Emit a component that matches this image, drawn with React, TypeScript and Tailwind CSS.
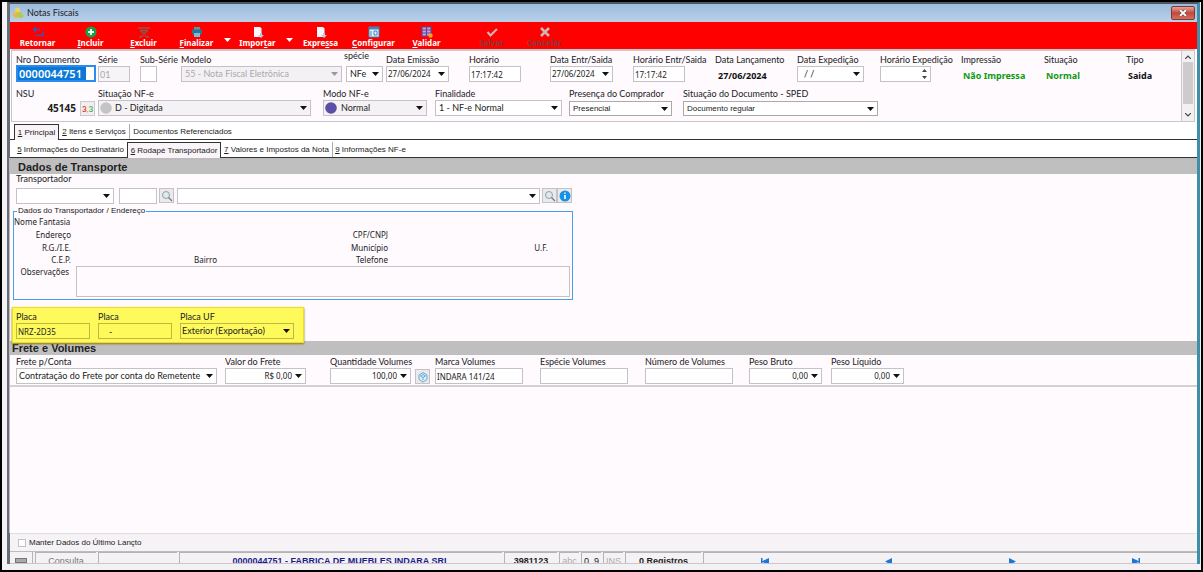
import React, { useId } from "react";

const label = "block h-[10px] whitespace-nowrap text-[9px] leading-[10px] text-[#222]";
const box = "block w-full rounded-none border border-[#c4c2c6] bg-white px-[3px] text-[9px] leading-[12px] text-[#222] outline-none";
const digits = "h-[16px] font-['Noto_Sans',sans-serif] !text-[8px]";
const date = "h-[16px] font-['Noto_Sans',sans-serif] !text-[8px] !px-px";

function Key({ text, at }: { text: string; at: number }) {
  return (
    <span>
      {text.slice(0, at)}
      <u className="underline">{text[at]}</u>
      {text.slice(at + 1)}
    </span>
  );
}

function Caret({ className = "" }: { className?: string }) {
  return (
    <svg viewBox="0 0 7 4" className={`h-[4px] w-[7px] ${className}`} fill="currentColor" aria-hidden="true">
      <path d="M0 0h7L3.500 4z" />
    </svg>
  );
}

type FieldProps = {
  name: string;
  value?: string;
  className?: string;
  inputClass?: string;
  labelClass?: string;
  disabled?: boolean;
};

function TextField({ name, value = "", className = "", inputClass = "h-[16px]", labelClass = "", disabled }: FieldProps) {
  const id = useId();
  return (
    <div className={`flex shrink-0 flex-col gap-px ${className}`}>
      <label htmlFor={id} className={`${label} ${labelClass}`}>{name}</label>
      <input id={id} defaultValue={value} disabled={disabled} className={`${box} ${inputClass}`} />
    </div>
  );
}

function SelectBox({ id, value, aria, disabled, selectClass = "h-[16px]", right }: { id?: string; value: string; aria?: string; disabled?: boolean; selectClass?: string; right?: boolean }) {
  return (
    <div className="relative w-full">
      <select
        id={id}
        aria-label={aria}
        disabled={disabled}
        defaultValue={value}
        className={`${box} ${selectClass} appearance-none py-0 ${right ? "pr-[13px] text-right" : ""}`}
      >
        <option>{value}</option>
      </select>
      <Caret className={`pointer-events-none absolute right-[4px] top-[6px] ${disabled ? "text-[#999]" : "text-[#111]"}`} />
    </div>
  );
}

function SelectField({ name, value = "", className = "", inputClass, labelClass = "", disabled, icon, right }: FieldProps & { icon?: React.ReactNode; right?: boolean }) {
  const id = useId();
  return (
    <div className={`flex shrink-0 flex-col gap-px ${className}`}>
      <label htmlFor={id} className={`${label} ${labelClass}`}>{name}</label>
      <div className="relative">
        <SelectBox id={id} value={value} disabled={disabled} selectClass={inputClass} right={right} />
        {icon && <span className="pointer-events-none absolute left-[2px] top-[2px]">{icon}</span>}
      </div>
    </div>
  );
}

function Info({ name, value, className = "", valueClass = "" }: { name: string; value: string; className?: string; valueClass?: string }) {
  return (
    <div className={`shrink-0 ${className}`}>
      <span className={label}>{name}</span>
      <strong className={`mt-[4px] block overflow-hidden whitespace-nowrap pl-[2px] font-['Noto_Sans',sans-serif] text-[9px] leading-[13px] ${valueClass}`}>{value}</strong>
    </div>
  );
}

function Tool({ text, at = -1, icon, off }: { text: string; at?: number; icon: React.ReactNode; off?: boolean }) {
  return (
    <button
      disabled={off}
      className={`flex w-[53px] shrink-0 flex-col items-center whitespace-nowrap pt-[4px] font-['Noto_Sans',sans-serif] text-[8px] font-bold leading-[10px] ${off ? "text-[#8a3a3a]" : "text-white"}`}
    >
      <svg viewBox="0 0 12 12" className="h-[12px] w-[12px]" aria-hidden="true">{icon}</svg>
      {at < 0 ? text : <Key text={text} at={at} />}
    </button>
  );
}

const page = (
  <g>
    <path d="M2 1h6l1.500 1.500V11H2z" fill="#f7f7fb" />
    <path d="M8 7h2v2h2l-3 3-3-3h2z" fill="#b9c9e6" />
  </g>
);

function Toolbar() {
  return (
    <div role="toolbar" aria-label="Ações" className="flex h-[27px] bg-[#ff0000] pl-px">
      <Tool text="Retornar" icon={<g fill="none" stroke="#4a4fa8" strokeWidth="1.500"><path d="M4 1 1.500 3.500 4 6M1.500 3.500H8M3 9.500h8V5" /></g>} />
      <Tool text="Incluir" at={0} icon={<g><circle cx="6" cy="6" r="5.600" fill="#12a347" /><path d="M6 3v6M3 6h6" stroke="#fff" strokeWidth="1.800" /></g>} />
      <Tool text="Excluir" at={0} icon={<g fill="none" stroke="#8a5a4c" strokeWidth="1.300"><path d="M0 2h12M2 4.500h8M3 11l6-6M9 11 3 5M1 11h3M8 11h3" /></g>} />
      <Tool text="Finalizar" at={0} icon={<g><path d="M3 1h6v3H3z" fill="#5d93ad" /><path d="M1 3.500h10v5H1z" fill="#2e7390" /><path d="M3 7h6v4H3z" fill="#7fb8cf" /></g>} />
      <button aria-label="Opções de finalizar" className="flex w-[8px] justify-center pt-[16px] text-white"><Caret className="w-[5px]" /></button>
      <Tool text="Importar" at={5} icon={page} />
      <button aria-label="Opções de importar" className="flex w-[10px] justify-center pt-[16px] text-white"><Caret className="w-[5px]" /></button>
      <Tool text="Expressa" at={5} icon={page} />
      <Tool text="Configurar" at={0} icon={<g><path d="M1 1h10v10H1z" fill="#e8f3fb" stroke="#3e86bd" /><path d="M1 1h10v2.500H1z" fill="#3e86bd" /><path d="M3 5v5M9 5H6v4h3z" stroke="#3e86bd" fill="none" /></g>} />
      <Tool text="Validar" at={0} icon={<g><path d="M1 1h9v9H1z" fill="#d9a0c0" /><path d="M1 1h9v9H1zM1 4h9M1 7h9M5.500 1v9" fill="none" stroke="#5547a5" strokeWidth="1.200" /><circle cx="9.500" cy="9.500" r="2.200" fill="#f4a024" /></g>} />
      <div className="w-[12px]" />
      <Tool off text="Salvar" icon={<path d="m1.500 6 3 3.500L11 3" fill="none" stroke="#d0b4b4" strokeWidth="2.200" />} />
      <Tool off text="Cancelar" icon={<path d="m2 2 8 8M10 2l-8 8" fill="none" stroke="#c9b8b8" strokeWidth="2.500" />} />
    </div>
  );
}

function Header() {
  const nro = useId();
  const nsu = useId();
  return (
    <section className="ml-px mr-[2px] flex border border-t-2 border-[#c9c7ca] bg-[#fefafe]">
      <div className="h-[70px] min-w-0 flex-1 overflow-hidden pl-[4px] pt-[4px]">
        <div className="flex">
          <div className="w-[82px] shrink-0">
            <label htmlFor={nro} className={label}>Nro Documento</label>
            <div className="flex h-[17px] w-[80px] border-2 border-[#2f8af0] bg-white">
              <input
                id={nro}
                defaultValue="0000044751"
                className="w-[68px] bg-[#0a78d7] pl-px font-['Noto_Sans',sans-serif] text-[11px] font-semibold leading-[13px] text-white outline-none"
              />
            </div>
          </div>
          <TextField name="Série" value="01" disabled className="mr-[10px] w-[32px]" inputClass="h-[16px] !bg-[#f6f4f7] !text-[#aaa] !px-px" />
          <TextField name="Sub-Série" className="mr-[24px] w-[17px]" />
          <SelectField name="Modelo" value="55 - Nota Fiscal Eletrônica" disabled className="mr-[4px] w-[161px]" inputClass="h-[16px] !bg-[#f3f1f4] !text-[#aaa]" />
          <div className="mr-[3px] w-[37px] shrink-0">
            <SelectField name="spécie" value="NFe" labelClass="-mt-[4px] mb-[4px] -ml-[2px]" />
          </div>
          <SelectField name="Data Emissão" value="27/06/2024" className="mr-[20px] w-[63px]" inputClass={date} />
          <TextField name="Horário" value="17:17:42" className="mr-[29px] w-[52px]" inputClass={date} />
          <SelectField name="Data Entr/Saida" value="27/06/2024" className="mr-[20px] w-[63px]" inputClass={date} />
          <TextField name="Horário Entr/Saida" value="17:17:42" className="mr-[30px] w-[52px]" inputClass={date} />
          <Info name="Data Lançamento" value="27/06/2024" className="w-[82px]" valueClass="pl-[3px] text-[#111]" />
          <SelectField name="Data Expedição" value="/  /" className="mr-[16px] w-[67px]" inputClass="h-[16px] !pl-[6px]" />
          <div className="relative mr-[30px] w-[51px] shrink-0">
            <TextField name="Horário Expedição" />
            <svg viewBox="0 0 5 10" className="pointer-events-none absolute bottom-[3px] right-[4px] h-[10px] w-[5px]" fill="#444" aria-hidden="true">
              <path d="M0 3h5L2.500 0zM0 7h5L2.500 10z" />
            </svg>
          </div>
          <Info name="Impressão" value="Não Impressa" className="w-[83px]" valueClass="w-[68px] text-[#0c9a12]" />
          <Info name="Situação" value="Normal" className="w-[82px]" valueClass="text-[#0c9a12]" />
          <Info name="Tipo" value="Saida" valueClass="text-[#111]" />
        </div>
        <div className="mt-[7px] flex">
          <div className="w-[82px] shrink-0">
            <label htmlFor={nsu} className={label}>NSU</label>
            <div className="flex pt-[2px]">
              <input id={nsu} defaultValue="45145" className="mr-[4px] w-[60px] bg-transparent text-right font-['Noto_Sans',sans-serif] text-[10px] font-bold leading-[15px] text-[#222] outline-none" />
              <button aria-label="Renumerar" className="flex h-[15px] w-[15px] items-center justify-center border border-[#cbc9cc] bg-[#f0eef0] text-[8px] font-bold">
                <span className="text-[#e8402c]">3</span>
                <span className="text-[#f0b020]">,</span>
                <span className="text-[#4caf50]">3</span>
              </button>
            </div>
          </div>
          <SelectField
            name="Situação NF-e"
            value="D - Digitada"
            className="mr-[12px] w-[213px]"
            inputClass="h-[16px] !bg-[#f4f2f5] !pl-[16px]"
            icon={<svg viewBox="0 0 12 12" className="h-[12px] w-[12px]"><circle cx="6" cy="6" r="5.800" fill="#c4c4c4" /><path d="M3 1a6 6 0 0 0 8 8A6 6 0 0 1 3 1z" fill="#8f8f8f" /></svg>}
          />
          <SelectField
            name="Modo NF-e"
            value="Normal"
            className="mr-[8px] w-[104px]"
            inputClass="h-[16px] !bg-[#f4f2f5] !pl-[17px]"
            icon={<svg viewBox="0 0 12 12" className="h-[12px] w-[12px]"><circle cx="6" cy="6" r="5.800" fill="#5a4ea6" /><path d="M3 1a6 6 0 0 0 8 8A6 6 0 0 1 3 1z" fill="#3d3190" /></svg>}
          />
          <SelectField name="Finalidade" value="1 - NF-e Normal" className="mr-[7px] w-[127px]" />
          <SelectField name="Presença do Comprador" value="Presencial" className="mr-[11px] w-[103px] pt-px" inputClass="h-[15px] font-['Liberation_Sans',sans-serif] !text-[8px] !border-[#aaa]" labelClass="-mt-px mb-px" />
          <SelectField name="Situação do Documento - SPED" value="Documento regular" className="w-[195px] pt-px" inputClass="h-[15px] font-['Liberation_Sans',sans-serif] !text-[8px] !border-[#aaa]" labelClass="-mt-px mb-px" />
        </div>
      </div>
      <div className="flex w-[13px] shrink-0 flex-col items-center justify-between border-l border-[#c9c7ca] bg-[#f2f0f2] py-[4px]" aria-hidden="true">
        <svg viewBox="0 0 6 4" className="h-[4px] w-[6px]" fill="none" stroke="#444" strokeWidth="1.200"><path d="m0 4 3-3 3 3" /></svg>
        <div className="mb-[6px] h-[42px] w-[10px] bg-[#cdcbcd]" />
        <svg viewBox="0 0 6 4" className="h-[4px] w-[6px]" fill="none" stroke="#444" strokeWidth="1.200"><path d="m0 0 3 3 3-3" /></svg>
      </div>
    </section>
  );
}

function Tab({ children, active, sep, className = "" }: { children: React.ReactNode; active?: boolean; sep?: boolean; className?: string }) {
  return (
    <button
      role="tab"
      aria-selected={!!active}
      className={`flex shrink-0 items-center justify-center whitespace-nowrap text-[8px] leading-[10px] text-[#222] ${
        active ? "-mb-px h-[16px] border border-b-0 border-[#333] bg-[#f8f4f8]" : "h-[15px]"
      } ${sep ? "border-l border-[#aaa]" : ""} ${className}`}
    >
      {children}
    </button>
  );
}

function SectionTitle({ children, className = "" }: { children: React.ReactNode; className?: string }) {
  return (
    <h2 className={`h-[14px] bg-[#bfbfbf] font-['Liberation_Sans',sans-serif] text-[11px] font-bold leading-[14px] text-[#222] ${className}`}>
      {children}
    </h2>
  );
}

function IconButton({ name, children }: { name: string; children: React.ReactNode }) {
  return (
    <button aria-label={name} className="flex h-[15px] w-[15px] shrink-0 items-center justify-center border border-[#c4c2c6] bg-[#ebe9ec]">
      <svg viewBox="0 0 12 12" className="h-[12px] w-[12px]" aria-hidden="true">{children}</svg>
    </button>
  );
}

const lens = (
  <g fill="none">
    <circle cx="5" cy="5" r="3.500" fill="#dfe9ee" stroke="#8fa0aa" />
    <path d="m7.500 7.500 3.500 3.500" stroke="#777" strokeWidth="1.300" />
  </g>
);

function Transport() {
  const obs = useId();
  const right = "text-right";
  return (
    <section>
      <SectionTitle className="pl-[8px]">Dados de Transporte</SectionTitle>
      <div className="pl-[6px]">
        <span className={label}>Transportador</span>
        <div className="mt-[4px] flex">
          <div className="mr-[5px] w-[98px] shrink-0"><SelectBox value="" aria="Tipo de transportador" /></div>
          <input aria-label="Código do transportador" className={`${box} mr-[2px] h-[16px] !w-[38px] shrink-0`} />
          <IconButton name="Pesquisar código">{lens}</IconButton>
          <div className="ml-[3px] mr-[2px] w-[363px] shrink-0"><SelectBox value="" aria="Transportador" /></div>
          <IconButton name="Pesquisar transportador">{lens}</IconButton>
          <IconButton name="Informações do transportador">
            <circle cx="6" cy="6" r="5.500" fill="#1592e6" />
            <path d="M6 5v4M6 2.500v1.200" stroke="#fff" strokeWidth="1.600" />
          </IconButton>
        </div>
      </div>
      <fieldset className="ml-[3px] mt-[2px] w-[560px] border border-[#4a9fe4] pb-[2px]">
        <legend className="ml-[3px] px-px font-['Liberation_Sans',sans-serif] text-[8px] leading-[10px] text-[#222]">Dados do Transportador / Endereço</legend>
        <div className="grid grid-cols-[57px_146px_171px_160px] grid-rows-[13px_13px_12px_12px] whitespace-nowrap font-['Noto_Sans',sans-serif] text-[8px] leading-[12px] text-[#222]">
          <span className="col-span-4">Nome Fantasia</span>
          <span className={right}>Endereço</span><span /><span className={right}>CPF/CNPJ</span><span />
          <span className={right}>R.G./I.E.</span><span /><span className={right}>Município</span><span className={right}>U.F.</span>
          <span className={right}>C.E.P.</span><span className={right}>Bairro</span><span className={right}>Telefone</span><span />
        </div>
        <div className="flex pr-[2px]">
          <label htmlFor={obs} className="w-[62px] shrink-0 pr-[7px] text-right font-['Noto_Sans',sans-serif] text-[8px] leading-[12px] text-[#222]">Observações</label>
          <textarea id={obs} className={`${box} h-[31px] resize-none !bg-[#fefafe]`} />
        </div>
      </fieldset>
    </section>
  );
}

const plate = "h-[16px] !bg-transparent !border-[#c2b83c]";
const plateDigits = "h-[16px] !bg-transparent !border-[#c2b83c] !px-px font-['Noto_Sans',sans-serif] !text-[8px]";

function Plates() {
  return (
    <section className="relative z-10 -mb-[2px] ml-[2px] mt-[7px] flex h-[36px] w-[292px] border border-[#f3dc1e] bg-[#fffa5c] pl-[3px] pt-[4px] shadow-[0_1px_2px_#8a7a20]">
      <TextField name="Placa" value="NRZ-2D35" className="mr-[8px] w-[74px]" inputClass={plateDigits} />
      <TextField name="Placa" value="   -" className="mr-[8px] w-[74px]" inputClass={plate} />
      <SelectField name="Placa UF" value="Exterior (Exportação)" className="w-[114px]" inputClass={`${plate} !px-px`} />
    </section>
  );
}

function Freight() {
  return (
    <section className="border-b-2 border-[#d4d1d5]">
      <SectionTitle className="pl-[2px]">Frete e Volumes</SectionTitle>
      <div className="flex pb-px pl-[6px] pt-[2px]">
        <SelectField name="Frete p/Conta" value="Contratação do Frete por conta do Remetente" className="mr-[8px] w-[201px]" inputClass="h-[16px] !px-[2px]" />
        <SelectField name="Valor do Frete" value="R$ 0,00" right className="mr-[24px] w-[81px]" inputClass={digits} />
        <SelectField name="Quantidade Volumes" value="100,00" right className="mr-[4px] w-[81px]" inputClass={digits} />
        <div className="mr-[5px] flex items-end">
          <IconButton name="Calcular volumes">
            <path d="M6 1.500 10 4v4.500L6 11 2 8.500V4z M3.500 5 6 3.500 8.500 5 6 6.500z M6 6.500V9" fill="none" stroke="#5caee0" />
          </IconButton>
        </div>
        <TextField name="Marca Volumes" value="INDARA 141/24" className="mr-[17px] w-[88px]" inputClass={date} />
        <TextField name="Espécie Volumes" className="mr-[17px] w-[88px]" />
        <TextField name="Número de Volumes" className="mr-[16px] w-[88px]" />
        <SelectField name="Peso Bruto" value="0,00" right className="mr-[9px] w-[73px]" inputClass={digits} />
        <SelectField name="Peso Líquido" value="0,00" right className="w-[73px]" inputClass={digits} />
      </div>
    </section>
  );
}

function Nav({ name, d }: { name: string; d: string }) {
  return (
    <button aria-label={name} className="flex flex-1 justify-center pt-[5px]">
      <svg viewBox="0 0 9 7" className="h-[7px] w-[9px]" fill="#1877d8" aria-hidden="true"><path d={d} /></svg>
    </button>
  );
}

const cell = "shrink-0 overflow-hidden whitespace-nowrap border-l border-t border-[#b5b3b6] pt-[3px] text-center";

function StatusBar() {
  return (
    <footer className="flex h-[12px] gap-[2px] overflow-hidden border-b border-[#c9c7ca] bg-[#f5f2f5] font-['Liberation_Sans',sans-serif] text-[9px] leading-[11px]">
      <div className="flex w-[23px] shrink-0 justify-center border-r border-[#b5b3b6] pt-[6px]"><div className="h-[5px] w-[12px] border border-[#777] bg-[#aaa]" /></div>
      <div className={`${cell} w-[61px] text-[#777]`}>Consulta</div>
      <div className={`${cell} w-[79px]`} />
      <div className={`${cell} w-[323px] font-bold text-[#1c1c8c]`}>0000044751 - FABRICA DE MUEBLES INDARA SRL</div>
      <div className={`${cell} w-[53px] font-bold text-[#222]`}>3981123</div>
      <div className={`${cell} w-[20px] text-[#aaa]`}>abc</div>
      <div className={`${cell} w-[20px] text-[#222]`}>0..9</div>
      <div className={`${cell} w-[20px] text-[#aaa]`}>INS</div>
      <div className={`${cell} w-[76px] font-bold text-[#222]`}>0 Registros</div>
      <nav className="flex min-w-0 flex-1 border-l border-t border-[#b5b3b6]">
        <Nav name="Primeiro" d="M0 0h1.500v3L8 0v7L1.500 4v3H0z" />
        <Nav name="Anterior" d="M8 0v7L1 3.500z" />
        <Nav name="Próximo" d="M1 0v7l7-3.500z" />
        <Nav name="Último" d="M9 0H7.500v3L1 0v7l6.500-3v3H9z" />
      </nav>
    </footer>
  );
}

export default function App() {
  return (
    <div className="flex min-h-screen flex-col bg-black p-[2px] font-['Lato','Open_Sans',sans-serif]">
      <div className="flex flex-1 flex-col bg-[#f4f1f4] pb-[6px] pl-[5px] pr-px">
        <main className="flex flex-1 flex-col border-l-[3px] border-r-[3px] border-t-2 border-l-[#676b75] border-r-[#3f8fa8] border-t-[#4c5560] bg-white">
          <header className="flex h-[18px] items-center bg-linear-to-b from-[#9dbbdc] to-[#b9d0ea] pl-[2px] pr-[2px]">
            <svg viewBox="0 0 12 12" className="mr-[3px] h-[12px] w-[12px]" aria-hidden="true">
              <path d="M0 8 5 5l3 3-4 3.500z" fill="#f2b632" />
              <path d="M4 5h4l4 4-3 2.500-4-2z" fill="#b7c84a" />
              <circle cx="5.500" cy="3" r="2.500" fill="#f0d060" />
            </svg>
            <h1 className="flex-1 text-[9px] leading-[12px] text-[#222]">Notas Fiscais</h1>
            <button aria-label="Fechar" className="flex h-[14px] w-[24px] items-center justify-center rounded-[2px] border border-[#7c3b36] bg-linear-to-b from-[#e0a39a] via-[#c4483a] to-[#d0705f]">
              <svg viewBox="0 0 8 6" className="h-[6px] w-[8px]" aria-hidden="true">
                <path d="m1 0 6 6M7 0 1 6" stroke="#5a4a4a" strokeWidth="3" />
                <path d="m1 0 6 6M7 0 1 6" stroke="#fff" strokeWidth="1.800" />
              </svg>
            </button>
          </header>
          <Toolbar />
          <Header />
          <div role="tablist" className="mt-[2px] flex border-b border-[#333] pl-[4px] font-['Liberation_Sans',sans-serif]">
            <Tab active className="w-[45px]"><Key text="1 Principal" at={0} /></Tab>
            <Tab className="w-[70px]"><Key text="2 Itens e Serviços" at={0} /></Tab>
            <Tab sep className="w-[106px]">Documentos Referenciados</Tab>
          </div>
          <div role="tablist" className="mt-[2px] flex border-b border-[#333] pl-[4px] font-['Liberation_Sans',sans-serif]">
            <Tab className="w-[113px]"><Key text="5 Informações do Destinatário" at={0} /></Tab>
            <Tab active className="w-[94px]"><Key text="6 Rodapé Transportador" at={0} /></Tab>
            <Tab className="w-[111px]"><Key text="7 Valores e Impostos da Nota" at={0} /></Tab>
            <Tab sep className="w-[76px]"><Key text="9 Informações NF-e" at={0} /></Tab>
          </div>
          <div className="-ml-px flex-1 border-l border-t-2 border-[#bdbbbe] bg-[#fefafe]">
            <Transport />
            <Plates />
            <Freight />
          </div>
          <div className="flex h-[19px] items-center border-b border-t border-b-[#bdbbbe] border-t-[#e0dee0] bg-[#f6f3f6] pl-[8px] font-['Liberation_Sans',sans-serif] text-[8px] text-[#222]">
            <label className="flex items-center gap-[3px]">
              <input type="checkbox" className="h-[8px] w-[8px] appearance-none border border-[#c4c2c6] bg-white" />
              Manter Dados do Último Lançto
            </label>
          </div>
          <StatusBar />
        </main>
      </div>
    </div>
  );
}
